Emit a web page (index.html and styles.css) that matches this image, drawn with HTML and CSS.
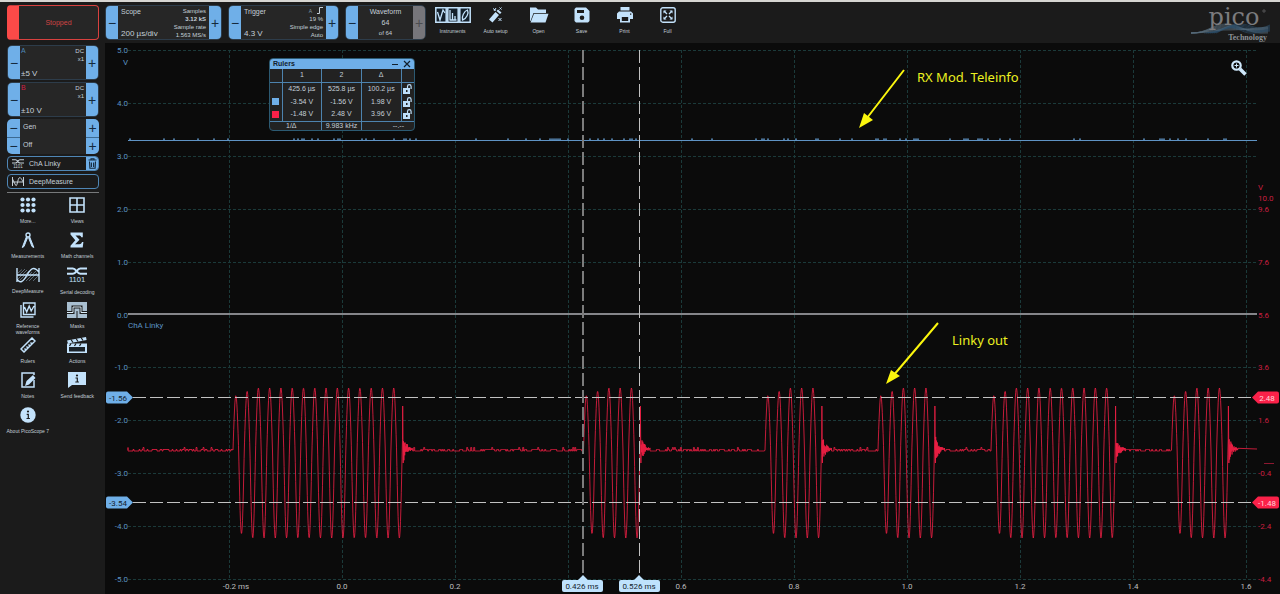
FILE: index.html
```html
<!DOCTYPE html>
<html lang="en">
<head>
    <meta charset="UTF-8">
    <meta name="viewport" content="width=device-width, initial-scale=1.0">
    <title>PicoScope 7</title>
    <link rel="stylesheet" href="styles.css">
</head>
<body>
    <aside class="sidebar">
        <button class="run-state" type="button">Stopped</button>

        <div class="stepper">
            <button type="button" aria-label="Decrease range A">−</button>
            <div class="channel">
                <span class="name-a">A</span>
                <span class="coupling">DC<br>x1</span>
                <span class="range">±5 V</span>
            </div>
            <button type="button" aria-label="Increase range A">+</button>
        </div>
        <div class="stepper">
            <button type="button" aria-label="Decrease range B">−</button>
            <div class="channel">
                <span class="name-b">B</span>
                <span class="coupling">DC<br>x1</span>
                <span class="range">±10 V</span>
            </div>
            <button type="button" aria-label="Increase range B">+</button>
        </div>
        <div class="generator">
            <div class="gen-row">
                <button type="button" aria-label="Previous generator">−</button>
                <span>Gen</span>
                <button type="button" aria-label="Next generator">+</button>
            </div>
            <div class="gen-row">
                <button type="button" aria-label="Previous mode">−</button>
                <span>Off</span>
                <button type="button" aria-label="Next mode">+</button>
            </div>
        </div>
        <div class="pill">
            <button class="pill-main" type="button">
                <svg width="12" height="10" viewBox="0 0 24 20"><use href="#i-decode"/></svg>
                ChA Linky
            </button>
            <button class="trash" type="button" aria-label="Delete ChA Linky">
                <svg width="9" height="11" viewBox="0 0 9 11"><path d="M0.5 2h8M3 2V0.7h3V2M1.5 3.5l.4 6.8h5.2l.4-6.8M3.4 4.5v4.5M5.6 4.5v4.5" fill="none" stroke="#152a3d" stroke-width="1.1"/></svg>
            </button>
        </div>
        <div class="pill">
            <button class="pill-main" type="button">
                <svg width="12" height="11" viewBox="0 0 24 20"><path d="M1 1v18M23 1v18M1 11h22M1 5l6 12c3 6 4-10 7-14 3-3 5 2 9 9" fill="none" stroke="currentColor" stroke-width="2"/></svg>
                DeepMeasure
            </button>
        </div>
        <hr>

        <nav class="tools">
            <button type="button"><svg width="16" height="16" viewBox="0 0 16 16"><g fill="currentColor"><circle cx="2.5" cy="2.5" r="2.1"/><circle cx="8" cy="2.5" r="2.1"/><circle cx="13.5" cy="2.5" r="2.1"/><circle cx="2.5" cy="8" r="2.1"/><circle cx="8" cy="8" r="2.1"/><circle cx="13.5" cy="8" r="2.1"/><circle cx="2.5" cy="13.5" r="2.1"/><circle cx="8" cy="13.5" r="2.1"/><circle cx="13.5" cy="13.5" r="2.1"/></g></svg><span>More...</span></button>
            <button type="button"><svg width="16" height="16" viewBox="0 0 16 16"><path d="M1 1h14v14H1zM8 1v14M1 8h14" fill="none" stroke="currentColor" stroke-width="1.6"/></svg><span>Views</span></button>
            <button type="button"><svg width="16" height="16" viewBox="0 0 16 16"><circle cx="8" cy="3" r="2" fill="none" stroke="currentColor" stroke-width="1.4"/><path d="M6.5 4.5L3 13.5l-.7 2 1.7-1L7.6 5.5M9.5 4.5l3.6 9 .7 2-1.8-1L8.5 5.5" fill="currentColor" stroke="currentColor" stroke-width="1"/></svg><span>Measurements</span></button>
            <button type="button"><svg width="16" height="16" viewBox="0 0 16 16"><path d="M1.500 .5h12.300v4.800h-1.500c-.3-1.500-1-1.900-2.500-1.900H6.500L10.500 7.800l-4.400 4.400h4.100c1.600 0 2.300-.6 2.800-2.200h1.400l-.7 5.500H1.500v-1.800L6.300 8.300 1.500 2.400z" fill="currentColor"/></svg><span>Math channels</span></button>
            <button type="button"><svg width="24" height="16" viewBox="0 0 24 16"><path d="M2 6l4-3.500M2 9l7-7M2 12l9-9M4 13l9-9M7 14l9-9M10 14L20 4M13 14l8-8M17 14l5-5" stroke="#6d7e8c" stroke-width=".8"/><path d="M1 1v14M23 1v14M1 8h22M1 12C4 17 7 15 11 8s7-9 12-3" fill="none" stroke="currentColor" stroke-width="1.4"/></svg><span>DeepMeasure</span></button>
            <button type="button"><svg width="20" height="17" viewBox="0 0 24 20"><g id="i-decode"><path d="M0 1.500h7c4 0 5 6.500 9 6.500h8M0 8h7c4 0 5-6.500 9-6.500h8" fill="none" stroke="currentColor" stroke-width="2.400"/><text x="12" y="18" text-anchor="middle" class="bits">1101</text></g></svg><span>Serial decoding</span></button>
            <button type="button"><svg width="16" height="16" viewBox="0 0 16 16"><path d="M3.500 1h11.500v11.500H3.500zM1 3v12h12.500M4.500 5l2.200 5 2.500-6 2 5L14 4" fill="none" stroke="currentColor" stroke-width="1.4"/></svg><span>Reference waveforms</span></button>
            <button type="button"><svg width="20" height="16" viewBox="0 0 20 16"><path d="M0 0h20v9h-4.500V3.500h-11V9H0zM0 12h7.500V6.500h5V12H20v4h-9.500V9h-1v7H0z" fill="#a9bfd0"/><path d="M0 10.500h6V5h8v5.500h6" fill="none" stroke="#dceefa" stroke-width="1"/></svg><span>Masks</span></button>
            <button type="button"><svg width="16" height="16" viewBox="0 0 16 16"><path d="M1 12L12 1l3 3L4 15zM4.500 11.500l1 1M6.500 9.500l1 1M8.500 7.500l1 1M10.500 5.500l1 1" fill="none" stroke="currentColor" stroke-width="1.500"/></svg><span>Rulers</span></button>
            <button type="button"><svg width="20" height="16" viewBox="0 0 20 16"><path d="M0 3.500L19 0l.6 3L1 6.500zM0 6.500h20V16H0z" fill="currentColor"/><path d="M4 2.500l2 3M9 1.500l2 3M14 .5l2 3M4 6.500L2.500 9M9 6.500L7.500 9M14 6.500L12.500 9" stroke="#1b1b1b" stroke-width="1.200"/><path d="M2 10h16v4.500H2z" fill="#1b2228"/></svg><span>Actions</span></button>
            <button type="button"><svg width="16" height="16" viewBox="0 0 16 16"><path d="M14 8v7H2V1h12v2" fill="none" stroke="currentColor" stroke-width="1.500"/><path d="M5 14l1.500-5L13 3l2.500 3L9 12.500z" fill="currentColor"/></svg><span>Notes</span></button>
            <button type="button"><svg width="20" height="16" viewBox="0 0 20 16"><path d="M1 0h18v13H5l-4 3z" fill="currentColor"/><circle cx="10" cy="3.500" r="1.100" fill="#1b1b1b"/><path d="M8.500 6h1.800v4M8.300 10h3.600" fill="none" stroke="#1b1b1b" stroke-width="1.200"/></svg><span>Send feedback</span></button>
            <button type="button"><svg width="16" height="16" viewBox="0 0 16 16"><circle cx="8" cy="8" r="7.700" fill="currentColor"/><circle cx="8" cy="4.500" r="1.100" fill="#1b1b1b"/><path d="M6.700 7.300h1.600v4M6.500 11.500h3.400" fill="none" stroke="#1b1b1b" stroke-width="1.200"/></svg><span>About PicoScope 7</span></button>
        </nav>
    </aside>

    <main>
        <header class="topbar">
            <div class="stepper scope">
                <button type="button" aria-label="Faster timebase">−</button>
                <div class="readout">
                    <div class="main-col"><span>Scope</span><span class="value">200 µs/div</span></div>
                    <div class="side-col"><span>Samples</span><b>3.12 kS</b><span>Sample rate</span><span>1.563 MS/s</span></div>
                </div>
                <button type="button" aria-label="Slower timebase">+</button>
            </div>
            <div class="stepper trigger">
                <button type="button" aria-label="Lower trigger">−</button>
                <div class="readout">
                    <div class="main-col"><span>Trigger</span><span class="value">4.3 V</span></div>
                    <div class="side-col">
                        <span class="edge"><i>A</i> <svg width="6" height="7" viewBox="0 0 6 7"><path d="M0 6.500h2.500v-6H6" fill="none" stroke="currentColor"/></svg></span>
                        <span>19 %</span><span>Simple edge</span><span>Auto</span>
                    </div>
                </div>
                <button type="button" aria-label="Raise trigger">+</button>
            </div>
            <div class="stepper waveform">
                <button type="button" aria-label="Previous waveform">−</button>
                <div class="counter"><span>Waveform</span><span>64</span><small>of 64</small></div>
                <button type="button" aria-label="Next waveform" disabled>+</button>
            </div>
            <nav class="actions">
                <button type="button"><svg width="36" height="16" viewBox="0 0 36 16"><path d="M.8.800h10.400v14.400H.8zM12.800.800h10.400v14.400H12.800zM24.800.800h10.400v14.400H24.800z" fill="#14202b" stroke="currentColor" stroke-width="1.500"/><path d="M2.500 5l2.500 8L8 3l2 3M15 13V3M17.500 13V6M20 13V9M14.500 13h7M27.500 13c-1-3 1.500-9 5-10 1.500 3-1 9-5 10z" fill="none" stroke="currentColor" stroke-width="1.300"/></svg><span>Instruments</span></button>
                <button type="button"><svg width="16" height="16" viewBox="0 0 16 16"><path d="M1 12.500L7.500 5l3.500 3-6.500 7.500zM8.500 4L10 2.500l3.500 3L12 7z" fill="currentColor"/><path d="M5 1.500l3 2M8 1L6 4M11.500 .5l2 2M13.500.500l-2 2M10.500 11l3 3M13.500 11l-3 3" stroke="currentColor" stroke-width="1"/></svg><span>Auto setup</span></button>
                <button type="button"><svg width="20" height="16" viewBox="0 0 20 16"><path d="M1 14V.5h6l2 2h8V6H4.500L1.500 14z" fill="currentColor"/><path d="M5 6.700h14.500l-3 8.800H1.500z" fill="currentColor"/></svg><span>Open</span></button>
                <button type="button"><svg width="16" height="16" viewBox="0 0 16 16"><path fill-rule="evenodd" d="M.5 2l1.500-1.500h10L15.500 4v10L14 15.500H2L.5 14zM3 3v3h7V3zM8 8.500a2.300 2.300 0 100 4.600 2.300 2.300 0 000-4.600z" fill="currentColor"/></svg><span>Save</span></button>
                <button type="button"><svg width="16" height="16" viewBox="0 0 16 16"><path fill-rule="evenodd" d="M3.500 0h9v3.500h-9zM2 4.500h12L16 6.500V12h-3v3.500H3V12H0V6.500zM4.800 10v4h6.400v-4zM13 6.500v1.200h1.300V6.500z" fill="currentColor"/></svg><span>Print</span></button>
                <button type="button"><svg width="16" height="16" viewBox="0 0 16 16"><rect x=".8" y=".8" width="14.400" height="14.400" rx="2" fill="none" stroke="currentColor" stroke-width="1.400"/><path d="M3.500 6.500v-3h3zM12.500 6.500v-3h-3zM3.500 9.500v3h3zM12.500 9.500v3h-3z" fill="currentColor"/><path d="M4 4l3 3M12 4L9 7M4 12l3-3M12 12L9 9" stroke="currentColor" stroke-width="1.300"/></svg><span>Full</span></button>
            </nav>
            <svg class="logo" width="84" height="40" viewBox="0 0 84 40" role="img" aria-label="pico Technology">
                <g id="mesh" fill="none" stroke-width=".6"></g>
                <text x="44" y="23" text-anchor="middle" class="logo-name">pico</text>
                <circle cx="74" cy="9" r="1.200" fill="none" stroke="#8a8a8c" stroke-width=".5"/>
                <text x="77" y="38" text-anchor="end" class="logo-sub">Technology</text>
            </svg>
        </header>

        <section class="chart">
            <svg class="plot" viewBox="105 43 1175 551">
                <g id="grid"></g>
                <path id="traceA" class="trace-a"/>
                <path d="M128 314H1257" class="zero"/>
                <path id="traceB" class="trace-b"/>
                <g class="ruler-lines">
                    <path d="M133 397.500H1253M133 502.500H1253"/>
                    <path d="M583 50V577" class="dim"/>
                    <path d="M639.500 50V577"/>
                </g>
                <g id="labels"></g>
                <text x="128" y="328" class="axis-a">ChA Linky</text>
                <path d="M1264 463.500h10" stroke="#8c1830"/>

                <g class="tag-a">
                    <path d="M108 391.500h19l6 6-6 6h-19q-2 0-2-2v-8q0-2 2-2z"/>
                    <path d="M108 496.500h19l6 6-6 6h-19q-2 0-2-2v-8q0-2 2-2z"/>
                    <text x="118" y="401">-1.56</text>
                    <text x="118" y="506">-3.54</text>
                </g>
                <g class="tag-b">
                    <path d="M1277 391.500h-19l-6 6 6 6h19q2 0 2-2v-8q0-2-2-2z"/>
                    <path d="M1277 496.500h-19l-6 6 6 6h19q2 0 2-2v-8q0-2-2-2z"/>
                    <text x="1267" y="401">2.48</text>
                    <text x="1267" y="506">-1.48</text>
                </g>
                <g class="tag-t">
                    <path d="M564 580h14l5-5 5 5h13q2 0 2 2v8q0 2-2 2h-37q-2 0-2-2v-8q0-2 2-2z"/>
                    <path d="M621 580h13l5-5 5 5h14q2 0 2 2v8q0 2-2 2h-37q-2 0-2-2v-8q0-2 2-2z"/>
                    <text x="582" y="589">0.426 ms</text>
                    <text x="639" y="589">0.526 ms</text>
                </g>

                <g class="note">
                    <path d="M904 70L867 118M938 323L893 376"/>
                    <path d="M859 128l5-15 9 7zM886 384l5-14 9 6z" class="head"/>
                    <text x="917" y="82">RX Mod. Teleinfo</text>
                    <text x="952" y="345">Linky out</text>
                </g>
            </svg>

            <div class="rulers">
                <div class="rulers-title">
                    <span>Rulers</span>
                    <button type="button" aria-label="Minimise"><svg width="8" height="8" viewBox="0 0 8 8"><path d="M1 4.500h6" stroke="#12202c"/></svg></button>
                    <button type="button" aria-label="Close"><svg width="8" height="8" viewBox="0 0 8 8"><path d="M1 1l6 6M7 1L1 7" stroke="#12202c" stroke-width="1.200"/></svg></button>
                </div>
                <table>
                    <thead>
                        <tr><th class="key"></th><th>1</th><th>2</th><th>Δ</th><th class="lock"></th></tr>
                    </thead>
                    <tbody>
                        <tr><td></td><td>425.6 µs</td><td>525.8 µs</td><td>100.2 µs</td><td><svg width="9" height="10" viewBox="0 0 9 10"><use href="#i-lock"/></svg></td></tr>
                        <tr><td><i class="swatch blue"></i></td><td>-3.54 V</td><td>-1.56 V</td><td>1.98 V</td><td><svg width="9" height="10" viewBox="0 0 9 10"><use href="#i-lock"/></svg></td></tr>
                        <tr><td><i class="swatch red"></i></td><td>-1.48 V</td><td>2.48 V</td><td>3.96 V</td><td><svg width="9" height="10" viewBox="0 0 9 10"><g id="i-lock"><path d="M0 4h7v6H0z" fill="#bfe0fa"/><path d="M4.500 4V2.500a1.800 1.800 0 013.600 0V5" fill="none" stroke="#bfe0fa" stroke-width="1.200"/><path d="M3 6h1.500v2H3z" fill="#222"/></g></svg></td></tr>
                    </tbody>
                    <tfoot>
                        <tr><td colspan="2" class="freq">1/Δ</td><td>9.983 kHz</td><td colspan="2" class="dashes">--.--</td></tr>
                    </tfoot>
                </table>
            </div>

            <button class="zoom" type="button" aria-label="Zoom">
                <svg width="16" height="16" viewBox="0 0 16 16"><circle cx="5.500" cy="5.500" r="4.200" fill="none" stroke="#cfe8fb" stroke-width="2.200"/><path d="M5.500 3.500v4M3.500 5.500h4" stroke="#cfe8fb" stroke-width="1"/><path d="M9 9l5.500 5.500" stroke="#cfe8fb" stroke-width="3.600"/></svg>
            </button>
        </section>
    </main>

    <script src="chart.js"></script>
</body>
</html>
```
FILE: styles.css
```css
* {
    box-sizing: border-box;
}

body {
    margin: 0;
    min-height: 100vh;
    display: grid;
    grid-template-columns: 105px 1fr;
    border-top: 2px solid #d6d5d2;
    background: #1b1b1b;
    color: #c4cfd8;
    font-family: "Liberation Sans", Arial, sans-serif;
    font-size: 7px;
    line-height: 8px;
}

button {
    margin: 0;
    padding: 0;
    border: 0;
    background: none;
    color: inherit;
    font: inherit;
    cursor: pointer;
}

svg {
    display: block;
}

/* Left column */
.sidebar {
    display: flex;
    flex-direction: column;
    gap: 2px;
    padding: 3px 6px 0 7px;
    min-width: 0;
}

.run-state {
    height: 35px;
    margin-bottom: 3px;
    border: 1px solid #d8413f;
    border-left: 12px solid #fb4a48;
    border-radius: 4px;
    background: #262626;
    color: #d04444;
}

.stepper {
    display: flex;
    height: 35px;
    border: 1px solid #2d3c4a;
    border-radius: 5px;
    background: #262626;
    overflow: hidden;
}

.stepper button,
.gen-row button {
    flex: none;
    width: 12px;
    background: #6fafe8;
    color: #152a3d;
    font-size: 14px;
}

.stepper button:disabled {
    background: #77767b;
    color: #4c4c50;
}

.channel {
    flex: 1;
    display: grid;
    grid-template-columns: 1fr auto;
    padding: 1px 2px 1px 1px;
}

.name-a {
    color: #4d86b8;
}

.name-b {
    color: #d01f45;
}

.coupling {
    font-size: 6px;
    text-align: right;
}

.range,
.value {
    font-size: 8px;
    align-self: end;
}

.generator {
    height: 35px;
    display: grid;
    border-radius: 5px;
    background: #262626;
    overflow: hidden;
}

.gen-row {
    display: flex;
    align-items: stretch;
}

.gen-row + .gen-row button {
    border-top: 1px solid #3c6a92;
}

.gen-row span {
    flex: 1;
    padding: 4px 3px;
}

.gen-row button {
    width: 13px;
}

.pill {
    display: flex;
    height: 15px;
    margin-bottom: 1px;
    border: 1px solid #4f86b5;
    border-radius: 4px;
    overflow: hidden;
}

.pill-main {
    flex: 1;
    display: flex;
    align-items: center;
    gap: 5px;
    padding-left: 4px;
}

.trash {
    width: 12px;
    padding-left: 2px;
    background: #6fafe8;
}

hr {
    width: 100%;
    margin: 0;
    border: 0;
    border-top: 1px solid #77797b;
}

.tools {
    display: grid;
    grid-template-columns: 1fr 1fr;
    grid-auto-rows: 34px;
    row-gap: 1px;
    margin: 0 -3px 0 -4px;
    padding-top: 2px;
}

.tools button {
    display: flex;
    flex-direction: column;
    align-items: center;
    gap: 5px;
    padding: 0 4px;
    font-size: 5px;
    line-height: 6px;
}

.tools span {
    margin: 0 -2px;
}

.tools svg,
.actions svg {
    flex: none;
    color: #c3e2fb;
}

.bits {
    font-family: "Liberation Sans", Arial, sans-serif;
    font-size: 9px;
    fill: currentColor;
}

/* Top bar */
main {
    display: flex;
    flex-direction: column;
    min-width: 0;
}

.topbar {
    display: flex;
    align-items: flex-end;
    gap: 6px;
    height: 41px;
    padding: 0 6px 3px 0;
}

.readout {
    flex: 1;
    display: flex;
    justify-content: space-between;
    padding: 1px 3px;
}

.main-col {
    display: flex;
    flex-direction: column;
    justify-content: space-between;
    padding-top: 1px;
    white-space: nowrap;
}

.main-col .value {
    align-self: flex-start;
}

.side-col {
    display: flex;
    flex-direction: column;
    text-align: right;
    font-size: 6px;
    white-space: nowrap;
}

.edge {
    display: flex;
    justify-content: flex-end;
    gap: 5px;
}

.edge i {
    font-size: 5px;
    font-style: normal;
    color: #7f96a8;
}

.scope {
    width: 117px;
}

.trigger {
    width: 111px;
}

.waveform {
    width: 81px;
}

.counter {
    flex: 1;
    display: flex;
    flex-direction: column;
    justify-content: space-between;
    align-items: center;
    padding: 2px 0;
}

.counter small {
    font-size: 6px;
}

.actions {
    display: flex;
    height: 35px;
    margin-left: -1px;
}

.actions button {
    width: 43px;
    display: flex;
    flex-direction: column;
    align-items: center;
    gap: 4px;
    padding-top: 2px;
    font-size: 5px;
}

.logo {
    align-self: flex-start;
    margin-left: auto;
}

.logo-name {
    font: 24px "DejaVu Serif", serif;
    fill: #7b7b7e;
}

.logo-sub {
    font: bold 8px "Liberation Serif", serif;
    fill: #8d9296;
}

/* Chart */
.chart {
    flex: 1;
    position: relative;
    background: #0b0b0b;
    font-family: Roboto, sans-serif;
}

.plot {
    width: 100%;
    height: auto;
    font-size: 8px;
}

.grid-line {
    fill: none;
    stroke: #1b3a3a;
    stroke-dasharray: 3 2;
}

.trace-a {
    fill: none;
    stroke: #5f93c4;
}

.trace-b {
    fill: none;
    stroke: #f21f45;
    stroke-width: 0.8;
}

.zero {
    stroke: #85868a;
    stroke-width: 2;
}

.ruler-lines {
    fill: none;
    stroke: #c2c2c2;
    stroke-dasharray: 13 4;
}

.ruler-lines .dim {
    stroke: #7c7c7c;
    stroke-width: 2;
}

.axis-a {
    fill: #5b93c2;
}

.axis-b {
    fill: #c91f40;
}

.axis-t {
    fill: #bdbdbd;
    text-anchor: middle;
}

.end {
    text-anchor: end;
}

.tag-a,
.tag-b,
.tag-t {
    text-anchor: middle;
}

.tag-a path {
    fill: #6fafe8;
}

.tag-b path {
    fill: #fb2149;
}

.tag-t path {
    fill: #bfe2fd;
}

.tag-a text,
.tag-t text {
    fill: #14222e;
}

.tag-b text {
    fill: #ffd5dc;
}

.note {
    fill: #ecf020;
    font: 13px "Noto Sans", sans-serif;
}

.note path {
    stroke: #fbf60d;
    stroke-width: 2;
}

.note .head {
    fill: #fbf60d;
    stroke: none;
}

/* Floating rulers window */
.rulers {
    position: absolute;
    left: 164px;
    top: 15px;
    width: 146px;
    border: 1px solid #2c5a72;
    border-radius: 4px;
    background: #222;
    overflow: hidden;
    font-family: "Liberation Sans", Arial, sans-serif;
}

.rulers-title {
    display: flex;
    align-items: center;
    gap: 4px;
    height: 10px;
    padding: 0 3px;
    background: #6fafe8;
    color: #12202c;
    font-weight: bold;
}

.rulers-title span {
    flex: 1;
}

.rulers table {
    width: 100%;
    table-layout: fixed;
    border-collapse: collapse;
    text-align: center;
}

.rulers th,
.rulers td {
    height: 13px;
    padding: 0;
    border-left: 1px solid #4d83ae;
    font-weight: normal;
}

.rulers th {
    border-bottom: 1px solid #4d83ae;
}

.rulers tr > :first-child {
    border-left: 0;
}

.rulers .key {
    width: 12px;
}

.rulers .lock {
    width: 13px;
}

.rulers td svg {
    margin: 0 auto;
}

.rulers tfoot td {
    height: 9px;
    border-top: 1px solid #4d83ae;
}

.rulers .freq {
    padding-left: 16px;
    text-align: left;
}

.rulers .dashes {
    padding-right: 10px;
    text-align: right;
}

.swatch {
    display: block;
    width: 7px;
    height: 7px;
    margin: 0 auto;
}

.blue {
    background: #6fafe8;
}

.red {
    background: #fb2149;
}

.zoom {
    position: absolute;
    top: 17px;
    right: 33px;
}
```
FILE: chart.js
```js
const grid = document.getElementById("grid");
const labels = document.getElementById("labels");

function add(parent, tag, attrs, text) {
    const el = document.createElementNS("http://www.w3.org/2000/svg", tag);
    for (const key in attrs) el.setAttribute(key, attrs[key]);
    if (text) el.textContent = text;
    parent.appendChild(el);
}

// Repeatable noise, so the traces look the same on every load
let seed = 7;
function rnd() {
    seed = (seed * 16807) % 2147483647;
    return seed / 2147483647;
}

// Grid and axis labels
for (let i = 0; i <= 10; i++) {
    const y = Math.round(50 + i * 52.9);
    if (i !== 5) add(grid, "path", { d: `M128 ${y + 0.5}H1257`, class: "grid-line" });
    add(labels, "text", { x: 128, y: y + 3, class: "axis-a end" }, (5 - i).toFixed(1));
    if (i >= 3) add(labels, "text", { x: 1258, y: y + 3, class: "axis-b" }, (15.6 - i * 2).toFixed(1));
}
add(labels, "text", { x: 128, y: 65, class: "axis-a end" }, "V");
add(labels, "text", { x: 1258, y: 190, class: "axis-b" }, "V");
add(labels, "text", { x: 1258, y: 201, class: "axis-b" }, "10.0");

for (let i = 0; i < 10; i++) {
    const x = 229 + i * 113;
    add(grid, "path", { d: `M${x + 0.5} 50V579`, class: "grid-line" });
    if (i === 3) continue;
    const value = (i * 0.2 - 0.2).toFixed(1);
    add(labels, "text", { x: i ? x : x + 7, y: 589, class: "axis-t" }, i ? value : value + " ms");
}

// Channel A: flat line with short blips
let a = "M128 140.5";
for (let x = 130; x < 1256; x += 2) {
    a += rnd() < 0.16 ? `H${x}V138.500V140.500` : `H${x}`;
}
document.getElementById("traceA").setAttribute("d", a + "H1257");

// Channel B: [start x, cycles] of each carrier burst
const bursts = [[233, 15], [583.5, 5], [765, 5], [878, 5], [991, 11], [1171.5, 5]];
const period = 11.28;
const mid = 450;
let x = 128;
let b = `M${x} ${mid}`;

function idle(to) {
    for (; x < to; x += 1) {
        const r = rnd();
        const y = r < 0.04 ? mid - 2.5 : r < 0.5 ? mid - 0.5 : mid + 1;
        b += `V${y}H${x.toFixed(1)}`;
    }
}

for (const [start, cycles] of bursts) {
    idle(start);
    b += `L${start} ${mid}`;
    const end = start + cycles * period + 0.5;
    for (let t = 0.3; start + t < end; t += 0.4) {
        const n = t / period;
        const grow = Math.min(1, 0.86 + n * 0.07);
        const s = Math.sin(2 * Math.PI * n);
        const y = s > 0 ? mid - s * 62 * grow : mid - s * 88 * Math.min(1, grow + 0.04);
        b += `L${(start + t).toFixed(1)} ${y.toFixed(1)}`;
    }
    b += `L${end} 406L${end + 0.5} 463`;
    for (let t = 0.8; t < 10; t += 0.4) {
        const amp = 14 * Math.exp(-t / 4) * (0.3 + rnd() * 0.8);
        b += `L${(end + t).toFixed(1)} ${(mid - 1 + (Math.round(t / 0.4) % 2 ? amp : -amp)).toFixed(1)}`;
    }
    x = end + 10;
}
b += "L1257 449";
document.getElementById("traceB").setAttribute("d", b);

// Woven lines behind the logo
const mesh = document.getElementById("mesh");
for (let i = 0; i < 7; i++) {
    const top = 22 + i;
    add(mesh, "path", { d: `M1 31C18 31 22 ${top} 36 ${top}S58 ${33 - i} 78 ${31 - i}`, stroke: "#566a78" });
    add(mesh, "path", { d: `M${14 + i * 2} 31C30 30 38 22 50 ${22 + i}S66 30 80 ${23 + i}`, stroke: "#2c4f6c" });
}
```
